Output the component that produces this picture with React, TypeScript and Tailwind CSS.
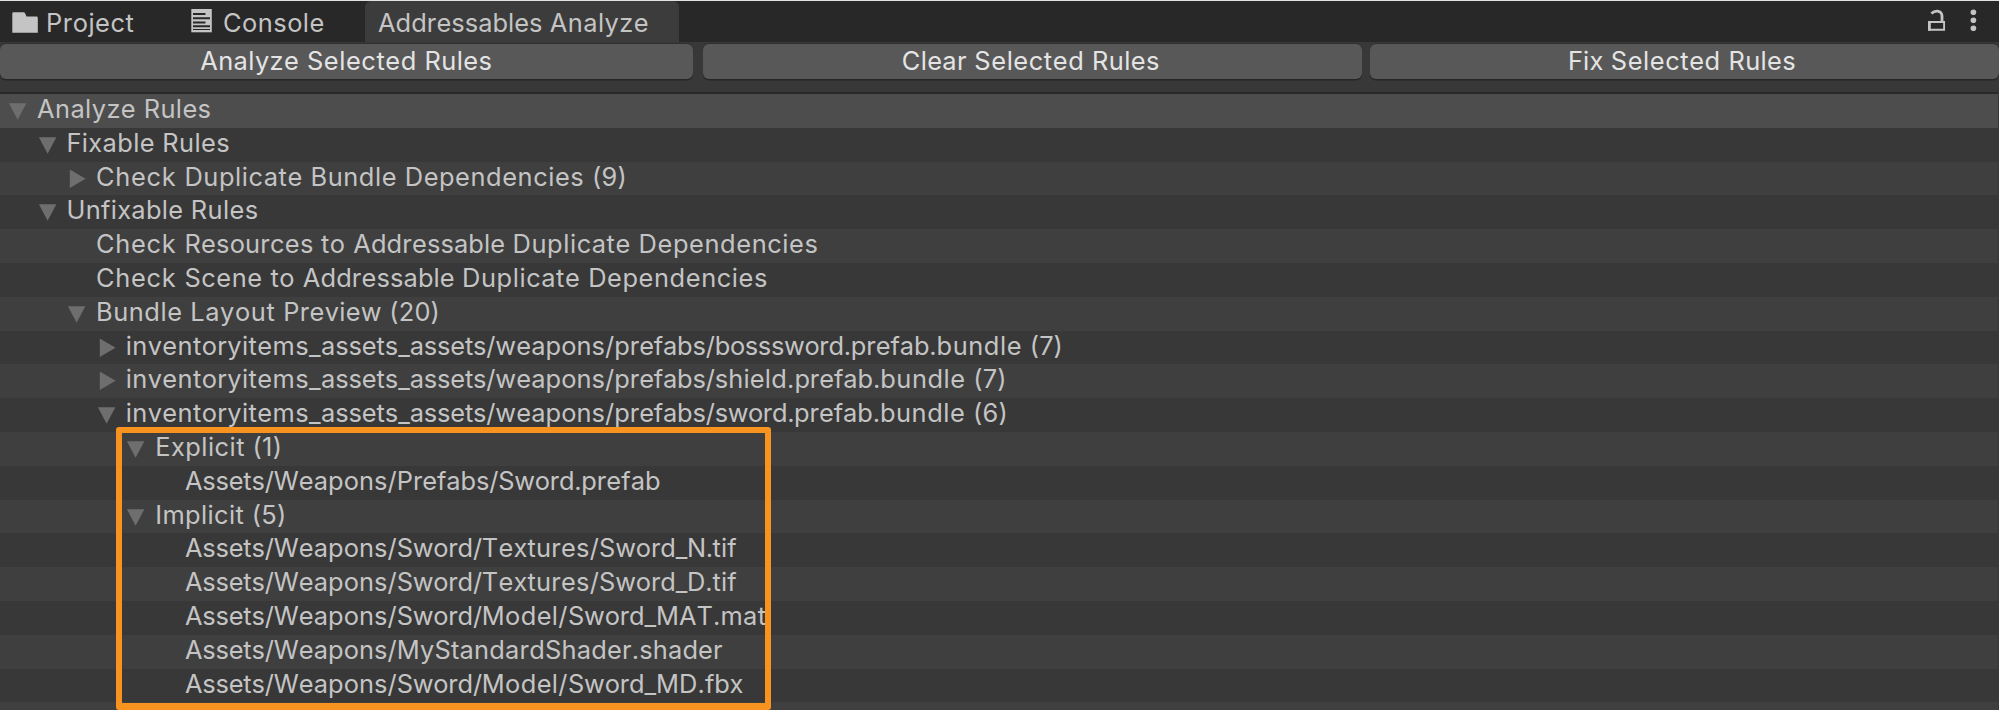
import type { ReactNode } from "react";

type Fold = "open" | "closed" | "none";
type Row = { label: string; indent: string; fold: Fold };

const INDENTS = [
  "pl-[8px]",
  "pl-[37.5px]",
  "pl-[67px]",
  "pl-[96.7px]",
  "pl-[126.3px]",
  "pl-[156px]",
];

const row = (label: string, level: number, fold: Fold = "none"): Row => ({
  label,
  indent: INDENTS[level],
  fold,
});

const rows: Row[] = [
  row("Fixable Rules", 1, "open"),
  row("Check Duplicate Bundle Dependencies (9)", 2, "closed"),
  row("Unfixable Rules", 1, "open"),
  row("Check Resources to Addressable Duplicate Dependencies", 2),
  row("Check Scene to Addressable Duplicate Dependencies", 2),
  row("Bundle Layout Preview (20)", 2, "open"),
  row("inventoryitems_assets_assets/weapons/prefabs/bosssword.prefab.bundle (7)", 3, "closed"),
  row("inventoryitems_assets_assets/weapons/prefabs/shield.prefab.bundle (7)", 3, "closed"),
  row("inventoryitems_assets_assets/weapons/prefabs/sword.prefab.bundle (6)", 3, "open"),
  row("Explicit (1)", 4, "open"),
  row("Assets/Weapons/Prefabs/Sword.prefab", 5),
  row("Implicit (5)", 4, "open"),
  row("Assets/Weapons/Sword/Textures/Sword_N.tif", 5),
  row("Assets/Weapons/Sword/Textures/Sword_D.tif", 5),
  row("Assets/Weapons/Sword/Model/Sword_MAT.mat", 5),
  row("Assets/Weapons/MyStandardShader.shader", 5),
  row("Assets/Weapons/Sword/Model/Sword_MD.fbx", 5),
];

// Glyph advances: [the font's own, per 120px em; the editor's grid-fitted one, per 24px em]
const ADVANCES: Record<string, [number, number]> = {
  A: [82.8, 16.7], B: [78.5, 16], C: [87.7, 18.3], D: [86.6, 18], E: [72.1, 15], F: [70.8, 14],
  I: [32.2, 6.5], L: [67.9, 14.5], M: [108.4, 22.3], N: [90.4, 18], P: [76.6, 16], R: [77.2, 16],
  S: [77, 15.2], T: [77.5, 16], U: [89.3, 18], W: [118.3, 23],
  a: [67.4, 13.9], b: [73.5, 15], c: [68.6, 14.3], d: [73.5, 15], e: [70, 15], f: [44.4, 8],
  h: [71, 15], i: [29.1, 6.3], j: [29.1, 6.3], k: [65.9, 14.2], l: [29.1, 6.3], m: [105.1, 21],
  n: [70.9, 15], o: [72, 15], p: [73.5, 15], r: [45.2, 8.3], s: [63.3, 11.85], t: [39.3, 8.7],
  u: [71, 15], v: [67.5, 14], w: [98.2, 19], x: [65.5, 13.3], y: [67.5, 14], z: [66.3, 13.2],
  "/": [43.3, 8], _: [54.7, 10.9], ".": [34.6, 6.1], "(": [43.8, 9], ")": [43.8, 9], " ": [33.8, 7],
  "0": [75.7, 15], "1": [48.8, 10], "2": [73.2, 15], "5": [73, 15], "6": [74.4, 15],
  "7": [67.9, 13.5], "9": [74.4, 15],
};

const FONT_SIZE = 25.4;
const GRID = 1.056;

function trackingOf(word: string) {
  const extra = [...word].reduce((sum, ch) => {
    const [own, fitted] = ADVANCES[ch];
    return sum + fitted * GRID - (own * FONT_SIZE) / 120;
  }, 0);
  return extra / word.length;
}

function Label({ text }: { text: string }) {
  const words = text.match(/[^ /_.]+[ /_.]?/g) ?? [];
  return (
    <>
      {words.map((word, i) => (
        <span key={i} style={{ letterSpacing: `${trackingOf(word).toFixed(3)}px` }}>
          {word}
        </span>
      ))}
    </>
  );
}

function FoldArrow({ fold }: { fold: Fold }) {
  return (
    <svg className="mt-[5px] h-[20px] w-[20px] shrink-0 overflow-visible fill-[#6e6e6e]" viewBox="0 0 20 20">
      {fold === "open" && <path d="M0.9 4.3H18.4L9.6 20.7z" />}
      {fold === "closed" && <path d="M2.8 2.5V20.9L18.6 11.7z" />}
    </svg>
  );
}

function TreeRow({ item, bg }: { item: Row; bg: string }) {
  return (
    <div className={`flex h-[33.8px] shrink-0 items-start ${item.indent} ${bg}`}>
      <FoldArrow fold={item.fold} />
      <span className="ml-[9px] whitespace-pre leading-[29px]">
        <Label text={item.label} />
      </span>
    </div>
  );
}

function ToolButton({ width, children }: { width: string; children: ReactNode }) {
  return (
    <button
      className={`h-[34.5px] shrink-0 whitespace-pre rounded-[6px] bg-[#585858] pb-[1px] text-center leading-[33px] text-[#e4e4e4] shadow-[0_1.5px_0_#262626,0_-1px_0_#303030] ${width}`}
    >
      {children}
    </button>
  );
}

export default function App() {
  return (
    <div className="relative flex h-[710px] w-[1999px] flex-col overflow-hidden border-t border-[#dfe3e1] bg-[#383838] font-['Inter',sans-serif] text-[25.4px] text-[#c4c4c4] [font-kerning:none]">
      <header className="flex h-[41px] shrink-0 items-start whitespace-pre bg-[#282828] leading-[43px]">
        <div className="flex w-[365px]">
          <div className="flex w-[191px] pl-[12px]">
            <svg className="mt-[11px] h-[21px] w-[26px] fill-[#c4c4c4]" viewBox="0 0 26 21">
              <path d="M0.3 1.5Q0.3 0.3 1.5 0.3H11.5Q12.7 0.3 13.2 1.6L14.5 4.6H24.6Q25.8 4.6 25.8 5.8V20.7H0.3z" />
            </svg>
            <span className="ml-[8px]">
              <Label text="Project" />
            </span>
          </div>
          <div className="flex">
            <svg className="mt-[8px] h-[24px] w-[21px]" viewBox="0 0 21 24">
              <path className="fill-[#c4c4c4]" d="M0.3 0H20.8V23.3H0.3z" />
              <path className="fill-[#282828]" d="M2 4H14.5V6H2zM2 8.3H19V10.3H2zM2 12.5H14.5V14.5H2zM2 16.2H19V18.2H2zM2 20H19V21H2z" />
            </svg>
            <span className="ml-[11px]">
              <Label text="Console" />
            </span>
          </div>
        </div>
        <div className="h-[41px] w-[314px] rounded-t-[6px] bg-[#3c3c3c] pl-[13px]">
          <Label text="Addressables Analyze" />
        </div>
        <div className="flex-1" />
        <svg className="mt-[8px] h-[23px] w-[56px]" viewBox="0 0 56 23">
          <path className="fill-none stroke-[#c4c4c4] stroke-[1.9]" d="M7 13H22.1V20.8H7z" />
          <path className="fill-none stroke-[#c4c4c4] stroke-[2.8]" d="M7.4 12.1V21.7M9.4 4.6Q12.2 1.9 15.6 2.2Q19.8 2.8 20 7V12.5" />
          <g className="fill-[#c4c4c4]">
            <circle cx="51.4" cy="3.3" r="2.8" />
            <circle cx="51.4" cy="11.3" r="2.8" />
            <circle cx="51.4" cy="19.3" r="2.8" />
          </g>
        </svg>
        <div className="w-[21px]" />
      </header>

      <div className="flex h-[50px] shrink-0 pt-[2px]">
        <ToolButton width="mr-[10.5px] w-[692.5px]">
          <Label text="Analyze Selected Rules" />
        </ToolButton>
        <ToolButton width="mr-[8px] w-[658.5px] pr-[3px]">
          <Label text="Clear Selected Rules" />
        </ToolButton>
        <ToolButton width="w-[629px] pr-[4px]">
          <Label text="Fix Selected Rules" />
        </ToolButton>
      </div>

      <div className="mr-[1px] flex flex-1 flex-col overflow-hidden border-t-2 border-[#292929]">
        <TreeRow item={row("Analyze Rules", 0, "open")} bg="bg-[#4d4d4d]" />
        {rows.map((item, i) => (
          <TreeRow key={item.label} item={item} bg={i % 2 ? "bg-[#3f3f3f]" : "bg-[#383838]"} />
        ))}
        <div className="h-[33.8px] shrink-0 bg-[#3f3f3f]" />
      </div>

      <div className="absolute left-[116px] top-[426px] h-[283px] w-[654.5px] rounded-[3px] border-[6px] border-b-[7px] border-[#f7931e]" />
    </div>
  );
}
